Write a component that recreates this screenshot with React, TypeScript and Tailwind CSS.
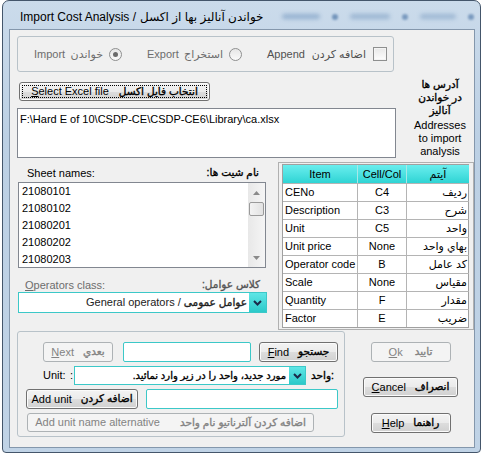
import React from "react";

const btnN =
  "rounded-[3px] border border-[#707070] bg-[linear-gradient(#f3f3f3_0%,#ebebeb_50%,#dddddd_51%,#d1d1d1_100%)] shadow-[inset_0_0_0_1px_#fbfbfb] text-black";
const btnD = "rounded-[3px] border border-[#adb2b5] bg-[#f4f4f4] text-[#838383]";

function Btn({ cls, disabled, children }: { cls: string; disabled?: boolean; children: React.ReactNode }) {
  return (
    <div className={`flex shrink-0 items-center justify-center gap-[9px] whitespace-nowrap ${disabled ? btnD : btnN} ${cls}`}>
      {children}
    </div>
  );
}

function Fa({ children, bold = true, cls = "" }: { children: React.ReactNode; bold?: boolean; cls?: string }) {
  return (
    <span
      dir="rtl"
      className={`whitespace-nowrap ${bold ? "text-[10.5px] [-webkit-text-stroke:0.35px_currentColor]" : ""} ${cls}`}
    >
      {children}
    </span>
  );
}

function Radio({ checked }: { checked?: boolean }) {
  return (
    <div className="ml-[6px] flex h-[13px] w-[13px] shrink-0 items-center justify-center rounded-full border border-[#8e8f8f] bg-[linear-gradient(#e6e6e6,#fafafa)]">
      {checked && <div className="h-[5px] w-[5px] rounded-full bg-[#6a6a6a]" />}
    </div>
  );
}

function Chevron() {
  return (
    <svg width="9" height="6" viewBox="0 0 9 6">
      <path d="M1 1 L4.5 4.5 L8 1" fill="none" stroke="#1a2a4a" strokeWidth="2" />
    </svg>
  );
}

const rows: [string, string, string][] = [
  ["CENo", "C4", "ردیف"],
  ["Description", "C3", "شرح"],
  ["Unit", "C5", "واحد"],
  ["Unit price", "None", "بهاي واحد"],
  ["Operator code", "B", "کد عامل"],
  ["Scale", "None", "مقیاس"],
  ["Quantity", "F", "مقدار"],
  ["Factor", "E", "ضریب"],
];

const sheets = ["21080101", "21080102", "21080201", "21080202", "21080203"];

const hdr = "flex h-[18px] items-center justify-center bg-[linear-gradient(#6aeeee,#2fd4d4)]";

export default function App() {
  return (
    <div className="relative h-[456px] w-[484px] overflow-hidden bg-white font-['Liberation_Sans','DejaVu_Sans',sans-serif] text-[11px] text-black">
      <div className="ml-[2px] flex h-[453px] w-[479px] flex-col rounded-t-[7px] rounded-b-[4px] border border-[#44566b] bg-[linear-gradient(180deg,#cbdbeb_0%,#bcd0e4_30%,#c0d3e6_100%)]">
        {/* title bar */}
        <div className="flex h-[28px] shrink-0 items-center pl-[17px] pt-[3px] text-[12px]">
          <span className="whitespace-nowrap">Import Cost Analysis / </span>
          <span dir="rtl" className="ml-[4px] whitespace-nowrap">خواندن آنالیز بها از اکسل</span>
          <div className="ml-[18px] flex items-center gap-[12px] opacity-70">
            <div className="h-[5px] w-[38px] rounded-full bg-[#7e9fc4] blur-[2px]" />
            <div className="h-[6px] w-[6px] rounded-full bg-[#4f78a8] blur-[1px]" />
            <div className="h-[5px] w-[40px] rounded-full bg-[#86a5c7] blur-[2px]" />
            <div className="h-[6px] w-[6px] rounded-full bg-[#5a80ad] blur-[1px]" />
            <div className="h-[5px] w-[36px] rounded-full bg-[#8aa8c9] blur-[2px]" />
            <div className="h-[6px] w-[6px] rounded-full bg-[#5a80ad] blur-[1px]" />
          </div>
        </div>

        {/* client area */}
        <div className="ml-[6px] flex h-[419px] w-[466px] flex-col border border-[#8497ac] bg-[#f0f0f0] pl-[7px] pt-[6px]">
          {/* top row */}
          <div className="flex">
            <div className="flex w-[379px] flex-col">
              <div className="flex h-[36px] w-[377px] items-center rounded-[3px] border border-[#b8c2c9] pl-[16px] text-[#6d6d6d]">
                <div className="flex w-[88px] items-center">
                  <span>Import</span>
                  <span className="ml-auto"><Fa bold={false}>خواندن</Fa></span>
                  <Radio checked />
                </div>
                <div className="ml-[25px] flex w-[95px] items-center">
                  <span>Export</span>
                  <span className="ml-auto"><Fa bold={false}>استخراج</Fa></span>
                  <Radio />
                </div>
                <div className="ml-[25px] flex w-[120px] items-center text-[#505050]">
                  <span>Append</span>
                  <span className="ml-auto"><Fa bold={false}>اضافه کردن</Fa></span>
                  <div className="ml-[7px] h-[14px] w-[14px] shrink-0 border border-[#8e8f8f] bg-[linear-gradient(#e8e8e8,#fdfdfd)] shadow-[inset_0_0_0_1px_#f4f4f4]" />
                </div>
              </div>
              <div className={`ml-[2px] mt-[10px] flex h-[19px] w-[191px] p-[2px] ${btnN}`}>
                <div className="flex flex-1 items-center justify-center gap-[10px] border border-dotted border-black whitespace-nowrap">
                  <span><u>S</u>elect Excel file</span>
                  <Fa>انتخاب فایل اکسل</Fa>
                </div>
              </div>
              <div className="mt-[7px] h-[50px] w-[379px] border border-[#828790] bg-white pl-[2px] pt-[2px] whitespace-nowrap">
                {"F:\\Hard E of 10\\CSDP-CE\\CSDP-CE6\\Library\\ca.xlsx"}
              </div>
            </div>
            <div className="ml-[10px] mt-[42px] flex w-[68px] flex-col items-center leading-[13px]">
              <Fa>آدرس ها</Fa>
              <Fa>در خواندن</Fa>
              <Fa>آنالیز</Fa>
              <span className="mt-[2px]">Addresses</span>
              <span>to import</span>
              <span>analysis</span>
            </div>
          </div>

          {/* middle row */}
          <div className="mt-[4px] flex">
            <div className="ml-[1px] flex w-[249px] flex-col">
              <div className="flex h-[20px] items-center justify-between pl-[9px] pr-[8px] pt-[2px]">
                <span>Sheet names:</span>
                <Fa>نام شیت ها:</Fa>
              </div>
              <div className="flex h-[86px] w-[248px] border border-[#828790] bg-white">
                <div className="flex flex-1 flex-col pl-[3px]">
                  {sheets.map((s) => (
                    <div key={s} className="flex h-[17px] shrink-0 items-center">
                      {s}
                    </div>
                  ))}
                </div>
                <div className="flex w-[17px] flex-col items-center bg-[linear-gradient(90deg,#e8e8e8,#f5f5f5)]">
                  <div className="flex h-[17px] items-center justify-center pt-[3px]">
                    <svg width="7" height="4" viewBox="0 0 7 4"><path d="M0 4 L3.5 0 L7 4Z" fill="#8a8a8a" /></svg>
                  </div>
                  <div className="mt-[2px] h-[14px] w-[15px] rounded-[2px] border border-[#9a9a9a] bg-[linear-gradient(90deg,#f3f3f3,#e2e2e2)]" />
                  <div className="mt-auto flex h-[17px] items-center justify-center pb-[2px]">
                    <svg width="7" height="4" viewBox="0 0 7 4"><path d="M0 0 L3.5 4 L7 0Z" fill="#8a8a8a" /></svg>
                  </div>
                </div>
              </div>
              <div className="mt-[10px] flex h-[14px] items-center justify-between pl-[7px] pr-[7px] text-[#6d6d6d]">
                <span><u>O</u>perators class:</span>
                <Fa cls="text-[#555]">کلاس عوامل:</Fa>
              </div>
              <div className="flex h-[21px] w-[249px] items-stretch border border-[#3cc8c8] bg-white">
                <div className="flex flex-1 items-center justify-end pr-[2px] text-[#222] whitespace-nowrap">
                  <span>General operators / </span>
                  <span className="ml-[3px]"><Fa>عوامل عمومی</Fa></span>
                </div>
                <div className="flex w-[17px] items-center justify-center bg-[linear-gradient(#5fe6e6,#2cc9c9)]">
                  <Chevron />
                </div>
              </div>
            </div>

            <div className="ml-[11px] h-[168px] w-[196px] border border-[#b0b0b0] pl-[3px] pt-[1px]">
              <div className="grid w-[187px] grid-cols-[75px_49px_62px] border border-[#a0a0a0] bg-white">
                <div className={`${hdr} border-r border-r-[#a8e8e8]`}>Item</div>
                <div className={`${hdr} border-r border-r-[#a8e8e8]`}>Cell/Col</div>
                <div className={hdr}><span dir="rtl">آیتم</span></div>
                {rows.map(([a, b, c]) => (
                  <React.Fragment key={a}>
                    <div className="flex h-[18px] items-center border-r border-t border-[#b4b4b4] pl-[2px] whitespace-nowrap">{a}</div>
                    <div className="flex h-[18px] items-center justify-center border-r border-t border-[#b4b4b4]">{b}</div>
                    <div className="flex h-[18px] items-center justify-end border-t border-[#b4b4b4] pr-[2px] whitespace-nowrap"><span dir="rtl">{c}</span></div>
                  </React.Fragment>
                ))}
              </div>
            </div>
          </div>

          {/* bottom row */}
          <div className="mt-[1px] flex">
            <div className="flex h-[106px] w-[328px] flex-col rounded-[3px] border border-[#b8c2c9] pt-[10px]">
              <div className="flex items-center">
                <Btn disabled cls="ml-[25px] h-[20px] w-[70px]">
                  <span><u>N</u>ext</span>
                  <Fa>بعدي</Fa>
                </Btn>
                <div className="ml-[10px] h-[20px] w-[128px] rounded-[2px] border border-[#3cc8c8] bg-white" />
                <Btn cls="ml-[8px] h-[20px] w-[79px]">
                  <span><u>F</u>ind</span>
                  <Fa>جستجو</Fa>
                </Btn>
              </div>
              <div className="mt-[4px] flex items-center">
                <div className="ml-[25px] flex w-[31px] items-center justify-between pr-[1px]">
                  <span>Unit:</span>
                  <span>:</span>
                </div>
                <div className="flex h-[19px] w-[232px] items-stretch border border-[#3cc8c8] bg-white">
                  <div className="flex flex-1 items-center justify-end pr-[3px] whitespace-nowrap">
                    <Fa cls="text-[10px]">مورد جدید، واحد را در زیر وارد نمائید.</Fa>
                  </div>
                  <div className="flex w-[16px] items-center justify-center bg-[linear-gradient(#5fe6e6,#2cc9c9)]">
                    <Chevron />
                  </div>
                </div>
                <span className="ml-[5px] whitespace-nowrap text-[10.5px] [-webkit-text-stroke:0.35px_currentColor]">واحد:</span>
              </div>
              <div className="mt-[4px] flex items-center">
                <Btn cls="ml-[8px] h-[20px] w-[112px]">
                  <span>Add unit</span>
                  <Fa>اضافه کردن</Fa>
                </Btn>
                <div className="ml-[8px] h-[20px] w-[192px] rounded-[2px] border border-[#3cc8c8] bg-white" />
              </div>
              <div className="mt-[4px] flex items-center">
                <Btn disabled cls="ml-[9px] h-[19px] w-[287px] gap-[20px]">
                  <span>Add unit name alternative</span>
                  <Fa>اضافه کردن آلترناتیو نام واحد</Fa>
                </Btn>
              </div>
            </div>

            <div className="ml-[18px] flex w-[95px] flex-col items-center pt-[11px]">
              <Btn disabled cls="h-[20px] w-[80px] gap-[12px]">
                <span><u>O</u>k</span>
                <Fa>تاييد</Fa>
              </Btn>
              <Btn cls="mt-[15px] h-[20px] w-[95px]">
                <span><u>C</u>ancel</span>
                <Fa>انصراف</Fa>
              </Btn>
              <Btn cls="mt-[16px] h-[20px] w-[80px]">
                <span><u>H</u>elp</span>
                <Fa>راهنما</Fa>
              </Btn>
            </div>
          </div>
        </div>
      </div>
    </div>
  );
}
